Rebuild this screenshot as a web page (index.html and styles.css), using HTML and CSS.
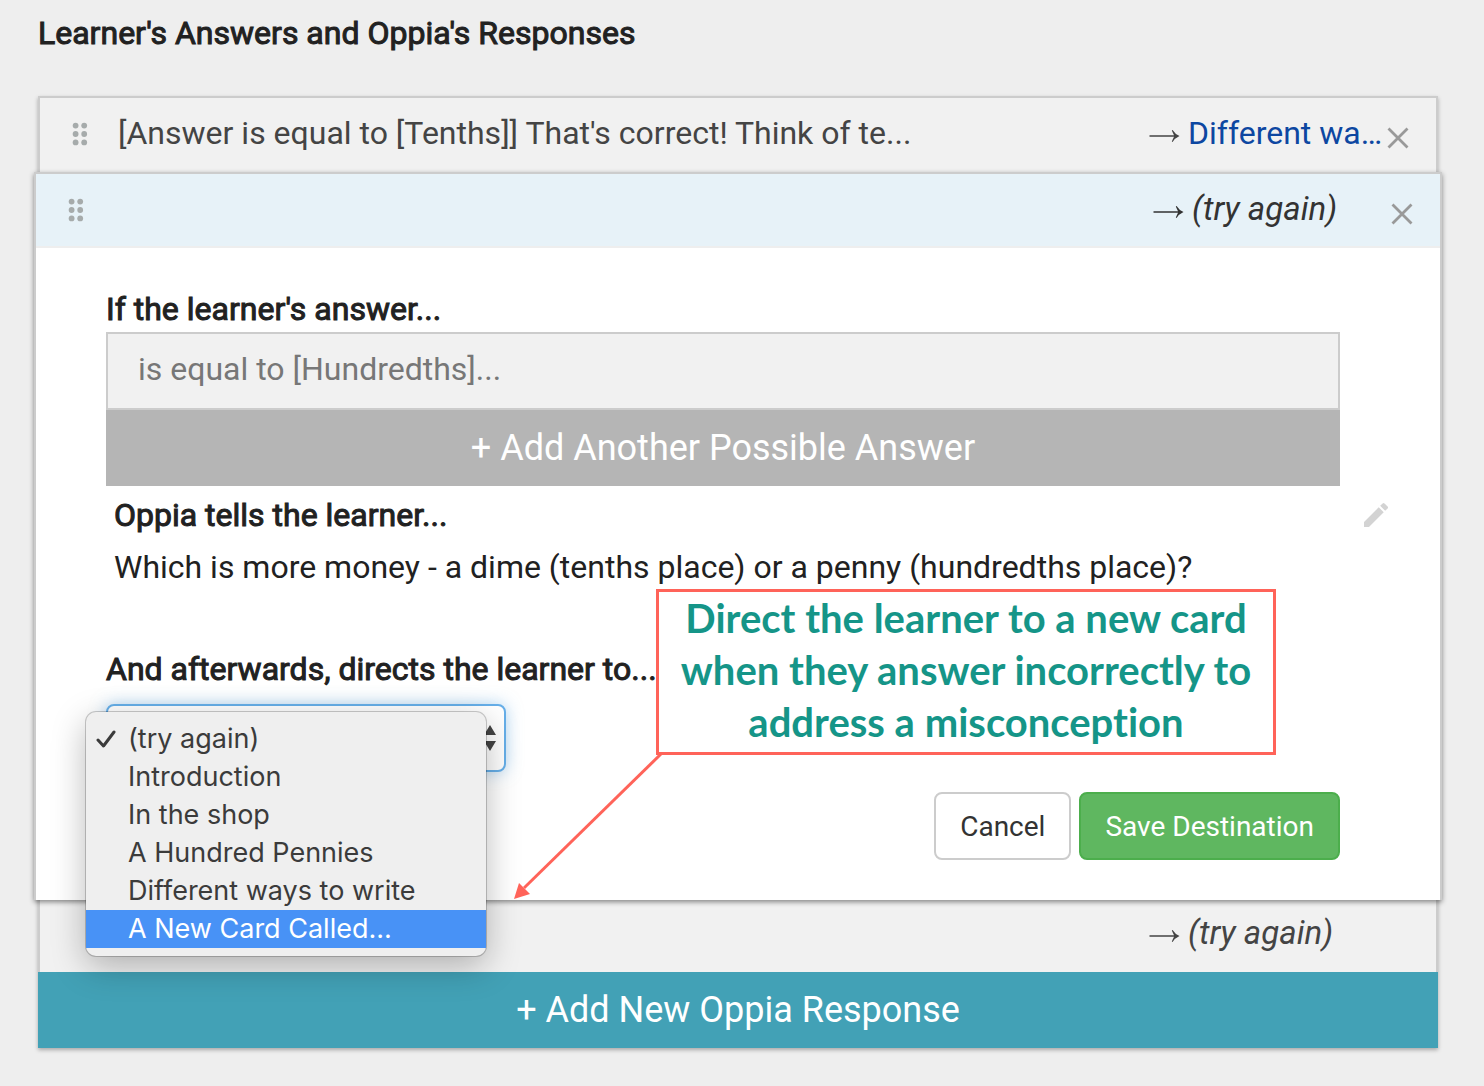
FILE: index.html
```html
<!DOCTYPE html>
<html lang="en">
<head>
<meta charset="utf-8">
<title>Learner's Answers and Oppia's Responses</title>
<link rel="stylesheet" href="styles.css">
</head>
<body>
<svg class="sprite" aria-hidden="true">
  <symbol id="handle" viewBox="0 0 16 24">
    <circle cx="3.600" cy="3.600" r="2.900"/><circle cx="12.200" cy="3.600" r="2.900"/>
    <circle cx="3.600" cy="12" r="2.900"/><circle cx="12.200" cy="12" r="2.900"/>
    <circle cx="3.600" cy="20.400" r="2.900"/><circle cx="12.200" cy="20.400" r="2.900"/>
  </symbol>
  <symbol id="arrow" viewBox="0 0 32 14">
    <path d="M1.500 5.200h24.500L23.800 0.400l.8-.4Q27 4 31.500 6q-4.500 2-6.900 6l-.8-.4L26 6.800H1.500z"/>
  </symbol>
  <symbol id="close" viewBox="0 0 22 22">
    <path d="M1.500 1.500l19 19M20.500 1.500l-19 19" fill="none" stroke="currentColor" stroke-width="2.800"/>
  </symbol>
</svg>
<main class="page">
  <h1 class="heading page-title">Learner's Answers and Oppia's Responses</h1>

  <section class="responses">
    <div class="row row-first">
      <svg class="handle"><use href="#handle"/></svg>
      <p class="summary">[Answer is equal to [Tenths]] That's correct! Think of te...</p>
      <div class="outcome"><svg class="arrow"><use href="#arrow"/></svg><a class="dest" href="#">Different wa…</a></div>
      <button class="icon-button close" type="button" aria-label="Delete response"><svg><use href="#close"/></svg></button>
    </div>

    <article class="card">
      <header class="row row-active">
        <svg class="handle"><use href="#handle"/></svg>
        <p class="summary"></p>
        <div class="outcome"><svg class="arrow"><use href="#arrow"/></svg><em class="dest">(try again)</em></div>
        <button class="icon-button close" type="button" aria-label="Delete response"><svg><use href="#close"/></svg></button>
      </header>

      <div class="card-body">
        <h2 class="heading rule-title">If the learner's answer...</h2>
        <div class="rule">is equal to [Hundredths]...</div>
        <button class="bar bar-grey" type="button">+ Add Another Possible Answer</button>

        <div class="feedback-head">
          <h2 class="heading">Oppia tells the learner...</h2>
          <button class="icon-button" type="button" aria-label="Edit feedback">
            <svg class="pencil" viewBox="0 0 24 24"><path d="M3 17.250V21h3.750L17.810 9.940l-3.750-3.750L3 17.250zM20.710 7.040a1 1 0 0 0 0-1.410l-2.340-2.340a1 1 0 0 0-1.410 0l-1.830 1.830 3.750 3.750 1.830-1.830z"/></svg>
          </button>
        </div>
        <p class="feedback">Which is more money - a dime (tenths place) or a penny (hundredths place)?</p>

        <label class="heading dest-label" for="destination">And afterwards, directs the learner to...</label>
        <div class="picker">
          <select class="select" id="destination">
            <option></option>
            <option>(try again)</option>
          </select>
          <svg class="stepper" viewBox="0 0 14 26"><path d="M7 0l6 10H1zM7 26l6-10H1z"/></svg>
          <ul class="menu" role="listbox" aria-label="Destination">
            <li class="option" role="option" aria-selected="true"><svg class="check" viewBox="0 0 20 18"><path d="M2 10l5.500 6L18 2" fill="none" stroke="currentColor" stroke-width="3" stroke-linecap="round" stroke-linejoin="round"/></svg>(try again)</li>
            <li class="option" role="option">Introduction</li>
            <li class="option" role="option">In the shop</li>
            <li class="option" role="option">A Hundred Pennies</li>
            <li class="option" role="option">Different ways to write</li>
            <li class="option option-active" role="option">A New Card Called...</li>
          </ul>
        </div>

        <div class="actions">
          <button class="button" type="button">Cancel</button>
          <button class="button button-save" type="button">Save Destination</button>
        </div>

        <aside class="callout">
          Direct the learner to a new card<br>when they answer incorrectly to<br>address a misconception
          <svg class="pointer" viewBox="0 0 150 148"><path d="M148 1L10 136" stroke="#ff6359" stroke-width="3"/><path d="M0 147l5-16 11 11z" fill="#ff6359"/></svg>
        </aside>
      </div>
    </article>

    <div class="row row-last">
      <span></span>
      <p class="summary"></p>
      <div class="outcome"><svg class="arrow"><use href="#arrow"/></svg><em class="dest">(try again)</em></div>
    </div>
    <button class="bar bar-teal" type="button">+ Add New Oppia Response</button>
  </section>
</main>
</body>
</html>
```
FILE: styles.css
```css
* { box-sizing: border-box; }
body {
  margin: 0;
  background: #eee;
  color: #212121;
  font: 32px/40px Roboto, sans-serif;
}
h1, h2, p, ul { margin: 0; padding: 0; }
button { font: inherit; cursor: pointer; }
.sprite { position: absolute; width: 0; height: 0; }
.page { padding: 13px 46px 38px 38px; }

.heading {
  display: block;
  font-size: 32px;
  font-weight: 400;
  -webkit-text-stroke: 1px currentColor;
}
.page-title { margin-bottom: 43px; }

.responses { box-shadow: 0 2px 4px rgba(0, 0, 0, .3); }

.row {
  display: grid;
  grid-template-columns: 78px minmax(0, 1fr) 234px 54px;
  align-items: start;
  background: #f1f1f1;
  color: #444;
}
.row-first {
  padding: 15px 0 19px;
  border: 2px solid #ccc;
  border-bottom: 0;
}
.row-active {
  padding: 15px 0 17px;
  border-bottom: 2px solid #eee;
  background: #e7f2f8;
  color: #333;
}
.row-last {
  padding: 13px 0 19px;
  border: 2px solid #ccc;
  border-width: 0 2px;
}
.handle {
  width: 16px;
  height: 24px;
  margin: 9px 0 0 32px;
  fill: #a6abab;
}
.summary, .dest { white-space: nowrap; }
.summary { overflow: hidden; text-overflow: ellipsis; }
.outcome { display: flex; align-items: flex-start; min-height: 40px; }
.arrow {
  flex: none;
  width: 32px;
  height: 14px;
  margin: 17px 8px 0 0;
  fill: currentColor;
}
.dest { color: inherit; text-decoration: none; }
em.dest { font-size: 33px; }
a.dest { color: #0d47a1; }

.icon-button {
  display: block;
  padding: 0;
  border: 0;
  background: none;
}
.icon-button svg { display: block; }
.close { width: 22px; height: 22px; margin: 14px 0 0 5px; color: #999; }
.close svg { width: 22px; height: 22px; }

.card {
  position: relative;
  z-index: 1;
  margin: 0 -4px;
  border: 2px solid #ccc;
  border-bottom: 0;
  background: #fff;
  box-shadow: 0 2px 5px rgba(0, 0, 0, .45);
}
.card-body { position: relative; padding: 41px 100px 40px 70px; }
.rule-title { margin-bottom: 3px; }
.rule {
  padding: 15px 30px 19px;
  border: 2px solid #ccc;
  background: #f1f1f1;
  color: #777;
}
.bar {
  display: block;
  width: 100%;
  padding: 18px;
  border: 0;
  color: #fff;
  font-size: 36px;
}
.bar-grey { background: #b5b5b5; }
.bar-teal { background: #42a1b6; }

.feedback-head {
  display: flex;
  justify-content: space-between;
  align-items: center;
  margin: 9px -52px 0 8px;
}
.pencil { width: 32px; height: 32px; fill: #d3d3d3; }
.feedback { margin: 12px 0 0 8px; }
.dest-label { margin: 62px 0 15px; }

.picker { position: relative; width: 400px; }
.select {
  display: block;
  width: 100%;
  height: 68px;
  border: 2px solid #66afe9;
  border-radius: 8px;
  background: #fff;
  box-shadow: 0 0 16px rgba(102, 175, 233, .5);
  appearance: none;
}
.stepper {
  position: absolute;
  top: 21px;
  right: 9px;
  width: 14px;
  height: 26px;
  fill: #444;
}
.menu {
  position: absolute;
  top: 8px;
  left: -20px;
  width: 400px;
  padding: 8px 0;
  border-radius: 10px;
  background: #efefef;
  box-shadow: 0 0 0 1px rgba(0, 0, 0, .2), 0 10px 34px rgba(0, 0, 0, .28);
  color: #3b3b3b;
  font: 27px/38px Inter, sans-serif;
  list-style: none;
}
.option { position: relative; padding-left: 42px; }
.option-active { background: #4892f6; color: #fff; }
.check { position: absolute; top: 10px; left: 10px; width: 20px; height: 18px; }

.actions {
  display: flex;
  justify-content: flex-end;
  gap: 8px;
  margin-top: 20px;
}
.button {
  padding: 13px 24px 11px;
  border: 2px solid #ccc;
  border-radius: 8px;
  background: #fff;
  color: #333;
  font-size: 28px;
}
.button-save { border-color: #4cae4c; background: #5fb760; color: #fff; }

.callout {
  position: absolute;
  top: 341px;
  left: 620px;
  width: 620px;
  padding: 0 0 4px;
  border: 3px solid #ff6359;
  background: #fff;
  color: #159588;
  font: 700 40px/52px Lato, sans-serif;
  font-variant-ligatures: none;
  text-align: center;
}
.pointer {
  position: absolute;
  top: 100%;
  right: 100%;
  width: 150px;
  height: 148px;
  margin-right: -5px;
}
```
